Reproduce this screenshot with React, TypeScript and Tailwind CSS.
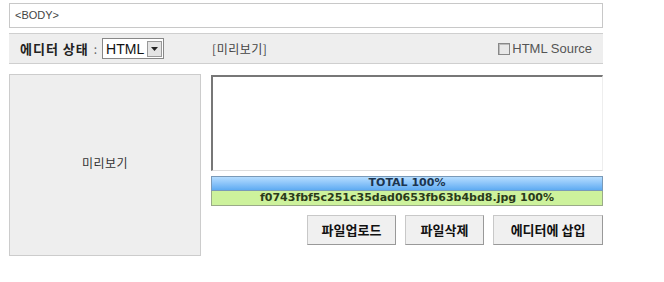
export default function App() {
  const ko = { fontFamily: '"Noto Sans CJK KR", "Liberation Sans", sans-serif' };
  const mono = { fontFamily: '"DejaVu Sans", Verdana, sans-serif' };

  return (
    <div className="h-[282px] w-[664px] bg-white pl-[9px] pt-[3px] text-[#333]" style={ko}>
      <div className="flex h-[25px] w-[594px] items-center border border-[#c8c8c8] bg-white pl-[5px] text-[11px] text-[#444]" style={{ fontFamily: '"Liberation Sans", sans-serif' }}>
        &lt;BODY&gt;
      </div>

      <div className="mt-[5px] flex h-[31px] w-[594px] items-center border-y border-[#cfcfcf] bg-[#eeeeee] pl-[11px] pr-[11px]">
        <span className="text-[13px] font-bold tracking-[1px] text-[#222]">에디터 상태</span>
        <span className="ml-[5px] text-[12px] text-[#666]">:</span>
        <div className="ml-[5px] flex h-[21px] w-[62px] items-center justify-between border border-[#888] bg-white pl-[3px] pr-[1px]">
          <span className="text-[14px] leading-none text-[#111]" style={{ fontFamily: '"Liberation Sans", sans-serif' }}>HTML</span>
          <span className="flex h-[16px] w-[15px] items-center justify-center border border-[#999] bg-[#e4e4e4]">
            <svg width="7" height="4" viewBox="0 0 7 4"><path d="M0 0h7L3.5 4z" fill="#222" /></svg>
          </span>
        </div>
        <span className="ml-[48px] text-[12px] tracking-[0.5px] text-[#444]">[미리보기]</span>
        <label className="ml-auto flex items-center gap-[2px]">
          <span className="h-[12px] w-[12px] border border-[#888] bg-[#e8e8e8] shadow-[inset_1px_1px_0_#bbb]" />
          <span className="text-[13px] text-[#555]" style={{ fontFamily: '"Liberation Sans", sans-serif' }}>HTML Source</span>
        </label>
      </div>

      <div className="mt-[10px] flex w-[594px] gap-[10px]">
        <div className="flex h-[182px] w-[192px] items-center justify-center border border-[#cccccc] bg-[#eeeeee] pb-[4px] text-[12px] tracking-[0.5px] text-[#333]">
          미리보기
        </div>

        <div className="flex w-[392px] flex-col pt-[1px]">
          <div className="h-[96px] border-b border-l-2 border-r border-t-2 border-b-[#ddd] border-l-[#777] border-r-[#eee] border-t-[#777] bg-white" />
          <div className="mt-[5px] flex h-[15px] items-center justify-center border border-[#7a9ab8] bg-gradient-to-b from-[#b5ddff] to-[#5eabf2] text-[11px] font-bold text-[#1c3550]" style={mono}>
            TOTAL 100%
          </div>
          <div className="flex h-[15px] items-center justify-center border border-t-0 border-[#9aaa88] bg-[#cdf29c] text-[11px] font-bold text-[#2a3a1a]" style={mono}>
            f0743fbf5c251c35dad0653fb63b4bd8.jpg 100%
          </div>
          <div className="mt-[9px] flex justify-end gap-[9px]">
            <button className="h-[30px] w-[89px] border border-[#c8c8c8] border-b-[#999] border-r-[#999] bg-[#f0f0f0] text-[13px] font-bold text-[#111]">파일업로드</button>
            <button className="h-[30px] w-[79px] border border-[#c8c8c8] border-b-[#999] border-r-[#999] bg-[#f0f0f0] text-[13px] font-bold text-[#111]">파일삭제</button>
            <button className="h-[30px] w-[110px] border border-[#c8c8c8] border-b-[#999] border-r-[#999] bg-[#f0f0f0] text-[13px] font-bold text-[#111]">에디터에 삽입</button>
          </div>
        </div>
      </div>
    </div>
  );
}
